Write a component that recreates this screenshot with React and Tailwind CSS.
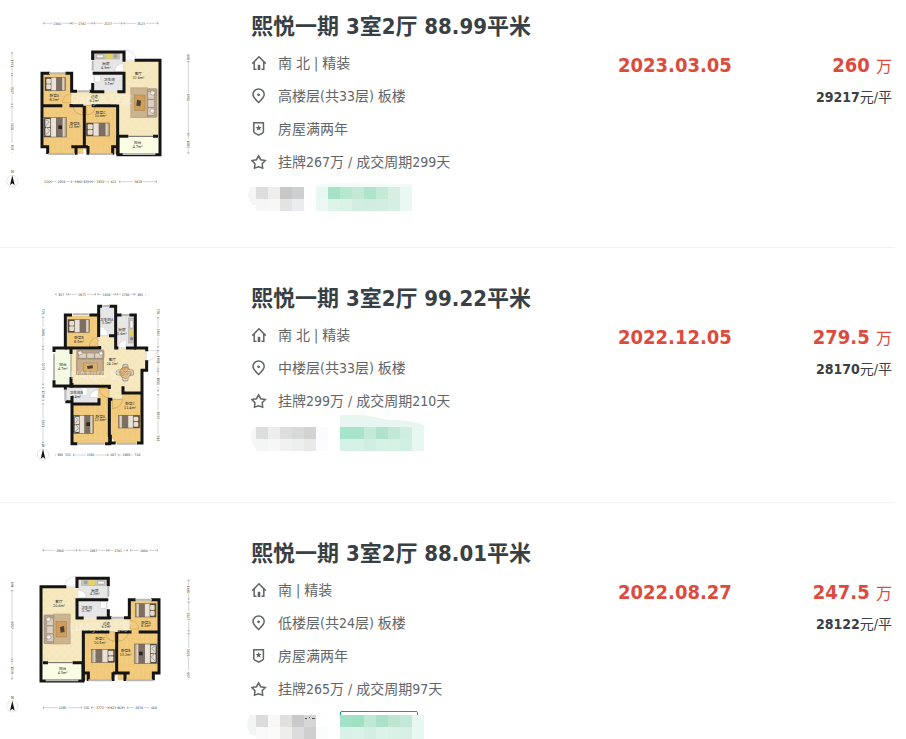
import React from 'react';

const HomeIcon = () => (
  <svg width="16" height="16" viewBox="0 0 16 16" fill="none" stroke="#5f6568" strokeWidth="1.5" aria-hidden="true">
    <path d="M1.3 8.6 8 1.8l6.7 6.8" />
    <path d="M3.2 7v7.2h2.3M12.8 7v7.2h-2.3" />
    <path d="M8 9.8V15" strokeWidth="2.6" />
  </svg>
);

const PinIcon = () => (
  <svg width="16" height="16" viewBox="0 0 16 16" fill="none" stroke="#5f6568" strokeWidth="1.5" aria-hidden="true">
    <path d="M7.6 14.4C5 12 2 9.6 2 6.6a5.6 5.6 0 0 1 11.2 0c0 3-3 5.4-5.6 7.8Z" />
    <circle cx="7.6" cy="6.8" r="1.4" fill="#5f6568" stroke="none" />
  </svg>
);

const BadgeIcon = () => (
  <svg width="16" height="16" viewBox="0 0 16 16" fill="none" stroke="#5f6568" strokeWidth="1.5" aria-hidden="true">
    <path d="M2.8 1.8h9.6v9.3c0 1-1.8 1.8-4.8 2.9-3-1.1-4.8-1.9-4.8-2.9Z" />
    <path d="m7.6 4 .9 2h2.1L9 7.4l.6 2.2-2-1.2-2 1.2.6-2.2L4.600 6h2.1Z" fill="#5f6568" stroke="none" />
  </svg>
);

const StarIcon = () => (
  <svg width="16" height="16" viewBox="0 0 16 16" fill="none" stroke="#5f6568" strokeWidth="1.5" aria-hidden="true">
    <path d="m7.600 1.800 2.100 3.900 4.600.8-3.100 3.300.5 4.300-4.100-1.200-4.100 1.200.5-4.300L.9 6.500l4.600-.8Z" />
  </svg>
);

const icons = { home: HomeIcon, pin: PinIcon, badge: BadgeIcon, star: StarIcon };

const Bed = ({ x, y, w, h, flip = false }) => (
  <g transform={flip ? `translate(${2 * x + w} 0) scale(-1 1)` : undefined}>
    <rect x={x} y={y} width={w} height={h} fill="#b5a68e" />
    <rect x={x} y={y} width={w * 0.3} height={h} fill="#5b4a3c" />
    <rect x={x + 4} y={y + 4} width={w * 0.22} height={h / 2 - 5} rx="3" fill="#e8ded0" />
    <rect x={x + 4} y={y + h / 2 + 1} width={w * 0.22} height={h / 2 - 5} rx="3" fill="#e8ded0" />
    <rect x={x + w * 0.32} y={y} width={w * 0.22} height={h} fill="#e9e2d6" />
    <rect x={x + w * 0.54} y={y} width={w * 0.3} height={h} fill="#7d6f64" />
    <rect x={x + w * 0.84} y={y} width={w * 0.08} height={h} fill="#e0d4c0" />
    <rect x={x} y={y} width={w} height={h} fill="none" stroke="#5c5042" strokeWidth="1.5" />
  </g>
);

const RoomLabel = ({ x, y, name, area }) => (
  <text x={x} y={y} textAnchor="middle" fontSize="11" fill="#222">
    <tspan>{name}</tspan>
    <tspan x={x} dy="11">{area}</tspan>
  </text>
);

// marks: [centre, length, text]; vertical rulers are the same thing turned by 90 degrees
const Ruler = ({ x = 0, y = 0, turn = 0, marks }) => (
  <g transform={`translate(${x} ${y}) rotate(${turn})`}>
    {marks.map(([at, length, text], i) => (
      <g key={i}>
        <path d={`M${at - length / 2} 0h${length}`} stroke="#aaa" strokeWidth="1.5" />
        <path d={`m${at - length / 2 + 4} -3 -4 3 4 3M${at + length / 2 - 4} -3l4 3-4 3`} fill="none" stroke="#777" strokeWidth="1.5" />
        <rect x={at - 14} y="-5" width="28" height="10" fill="#fff" />
        <text x={at} y="4" textAnchor="middle" fontSize="10" fill="#333">{text}</text>
      </g>
    ))}
  </g>
);

const Compass = ({ x, y }) => (
  <g>
    <circle cx={x} cy={y} r="17" fill="#fff" stroke="#ccc" strokeWidth="1.5" />
    <path d={`M${x} ${y - 17}l7 30-7-6-7 6Z`} fill="#111" />
    <text x={x} y={y - 23} textAnchor="middle" fontSize="12" fill="#333">N</text>
  </g>
);

const Defs = () => (
  <defs>
    <pattern id="wood" width="16" height="40" patternUnits="userSpaceOnUse">
      <rect width="16" height="40" fill="#f2cc80" />
      <path d="M0 0v40M8 0v40M0 8h8M8 28h8" stroke="#e9bf6e" strokeWidth="1.5" />
    </pattern>
    <pattern id="tile" width="14" height="14" patternUnits="userSpaceOnUse">
      <rect width="14" height="14" fill="#e7e7e8" />
      <path d="M0 0h14M0 0v14" stroke="#dcdcdd" />
    </pattern>
    <pattern id="stone" width="24" height="24" patternUnits="userSpaceOnUse">
      <rect width="24" height="24" fill="#f6e8bf" />
      <path d="M0 12 12 0l12 12-12 12Z" fill="none" stroke="#efdfb0" />
    </pattern>
  </defs>
);

const PlanFrame = ({ top, label, children }) => (
  <svg
    className="block w-full h-auto"
    viewBox={`0 ${top} 600 600`}
    role="img"
    aria-label={label}
    fontFamily="'DejaVu Sans Condensed', 'Noto Sans CJK SC', sans-serif"
  >
    <Defs />
    {children}
  </svg>
);

const CornerFlat = () => (
  <g>
    <path d="M130 192h83v98h37v142H143v-22h-13Z" fill="url(#wood)" />
    <path d="M250 288h102v144h-88l-14-22Z" fill="url(#wood)" />
    <path d="M213 246h159v-94h105v228H354v-92H213Z" fill="url(#stone)" />
    <path d="M280 130h90v60h-90Z M280 194h90v52h-90Z" fill="url(#tile)" />
    <path d="M356 382h119v48H356Z" fill="#fbfce4" />
    <g fill="#fff" stroke="#c4c4c4" strokeWidth="1.5">
      <path d="M376 150v-31q26 3 34 31Z" />
      <path d="M370 160q-24 2-26 24h26Z" />
      <path d="M213 252q-24 2-26 26h26Z" fill="none" stroke="#c69c55" />
      <path d="M248 286h-30q3 26 30 29ZM260 286h27q-3 26-27 29Z" fill="#f2cc80" stroke="#b98d45" />
      <rect x="284" y="196" width="18" height="20" rx="2" />
    </g>
    <rect x="284" y="130" width="74" height="17" fill="#c9c4b8" stroke="#888" />
    <rect x="319" y="131" width="18" height="15" fill="#e7d361" />
    <path d="M290 135h20v8h-20Z" fill="#f7f7f7" stroke="#777" />
    <circle cx="346" cy="138" r="5" fill="#aaa" stroke="#777" />
    <rect x="391" y="232" width="53" height="92" fill="#c6ac87" />
    <rect x="395" y="236" width="45" height="84" fill="#ccb491" />
    <g fill="#dfd1c0" stroke="#8b7867" strokeWidth="1.5">
      <rect x="442" y="236" width="29" height="86" rx="3" fill="#b7a594" />
      <rect x="443" y="245" width="20" height="23" rx="3" />
      <rect x="443" y="269" width="20" height="23" rx="3" />
      <rect x="443" y="293" width="20" height="23" rx="3" />
      <path d="m455 241 11 6-6 10-10-6ZM454 295l11 5-6 11-10-6Z" fill="#f2ede5" />
    </g>
    <rect x="403" y="255" width="32" height="47" fill="#cf9e5c" stroke="#8a6a3b" />
    <path d="m411 269 12 3-2 17-12-2Z" fill="#4a4238" />
    <Bed x={135} y={202} w={62} h={40} />
    <Bed x={132} y={323} w={67} h={58} />
    <path d="m133 326 15 10-12 12 13 14-14 15" fill="none" stroke="#83aec0" strokeWidth="3" />
    <rect x="175" y="346" width="11" height="11" fill="#26251f" />
    <Bed x={259} y={339} w={69} h={39} />
    <g fill="none" stroke="#141414" strokeWidth="9">
      <path d="M150 190h-24v220h17v22M196 190h19v54h16M268 244h10v-24M278 150v-24h94v29M278 190h94v55h-20M278 219v26h35M404 151h76v283H354v-55M474 379h-15M385 379H354" />
      <path d="M126 287h61M213 282v5h37M253 287v123M275 287h78v147M214 410h39M228 408v26M264 408v26M253 410h11M338 434v-24h15" />
    </g>
    <path d="M147 190h49M231 244h39M145 432h80M268 432h70M368 432h98M278 152v30" fill="none" stroke="#b8b8b8" strokeWidth="6" />
    <path d="M385 379h75" stroke="#666" strokeWidth="3" />
  </g>
);

const EastPlan = () => (
  <PlanFrame top={-18} label="户型图 88.99平米">
    <CornerFlat />
    <text x="304" y="283" textAnchor="middle" fontSize="34" fill="#fff" opacity="0.4">LIANJIA 链家</text>
    <RoomLabel x={318} y={166} name="厨房" area="4.9m²" />
    <RoomLabel x={328} y={214} name="卫生间" area="3.7m²" />
    <RoomLabel x={415} y={196} name="客厅" area="22.6m²" />
    <RoomLabel x={163} y={261} name="卧室A" area="8.2m²" />
    <RoomLabel x={283} y={265} name="过道" area="6.2m²" />
    <RoomLabel x={224} y={344} name="卧室B" area="12.9m²" />
    <RoomLabel x={302} y={311} name="卧室C" area="10.6m²" />
    <RoomLabel x={413} y={403} name="阳台" area="4.7m²" />
    <Ruler y={40} marks={[[172, 84, '2366'], [246, 64, '1741'], [324, 86, '2537'], [423, 104, '3523']]} />
    <Ruler y={515} marks={[[141, 22, '526'], [184, 66, '2054'], [249, 50, '842·835'], [301, 54, '1810'], [340, 24, '623'], [414, 114, '3419']]} />
    <Ruler x={36} turn={90} marks={[[160, 66, '1701'], [240, 90, '2537'], [350, 124, '3535'], [413, 28, '807']]} />
    <Ruler x={565} turn={90} marks={[[141, 26, '648'], [263, 220, '6452'], [402, 58, '1380']]} />
    <Compass x={37} y={513} />
  </PlanFrame>
);

const WestPlan = () => (
  <PlanFrame top={-27} label="户型图 88.01平米">
    <g transform="translate(603 -11) scale(-1 1)">
      <CornerFlat />
    </g>
    <text x="302" y="272" textAnchor="middle" fontSize="34" fill="#fff" opacity="0.4">LIANJIA 链家</text>
    <RoomLabel x={285} y={155} name="厨房" area="4.2m²" />
    <RoomLabel x={260} y={206} name="卫生间" area="3.7m²" />
    <RoomLabel x={177} y={189} name="客厅" area="20.6m²" />
    <RoomLabel x={438} y={251} name="卧室A" area="8.1m²" />
    <RoomLabel x={319} y={254} name="过道" area="6.2m²" />
    <RoomLabel x={377} y={336} name="卧室B" area="13.2m²" />
    <RoomLabel x={300} y={300} name="卧室C" area="10.5m²" />
    <RoomLabel x={188} y={391} name="阳台" area="4.5m²" />
    <Ruler y={31} marks={[[180, 104, '2960'], [280, 86, '2497'], [354, 60, '1741'], [432, 84, '2406']]} />
    <Ruler y={503} marks={[[188, 118, '3395'], [260, 28, '505'], [300, 54, '1772'], [350, 50, '623·863'], [417, 72, '2074'], [462, 24, '660']]} />
    <Ruler x={36} turn={90} marks={[[134, 26, '648'], [255, 210, '6457'], [390, 56, '1328']]} />
    <Ruler x={566} turn={90} marks={[[149, 60, '1680'], [229, 90, '2527'], [338, 118, '3425'], [405, 26, '647']]} />
    <Compass x={37} y={499} />
  </PlanFrame>
);

const CrossPlan = () => (
  <PlanFrame top={-27} label="户型图 99.22平米">
    <path d="M200 92h95v97h-95ZM218 332l80-28h29v170H218ZM330 326h96v148h-78l-18-20Z" fill="url(#wood)" />
    <path d="M215 190h82v-38h49v37h92v66h-14v70h-58v17h-38v-39H215Z" fill="url(#stone)" />
    <path d="M297 66h50v86h-50ZM349 92h56v98h-56ZM197 308h98v48h-78v-5h-20Z" fill="url(#tile)" />
    <path d="M164 192h49v108h-49Z" fill="#f4fbe2" />
    <g fill="#fff" stroke="#c4c4c4" strokeWidth="1.5">
      <path d="M439 197h34q-3 26-34 31Z" />
      <path d="M297 124q25 2 27 27h-27ZM355 188q2-22 24-22v22Z" />
      <path d="M294 157q-24 2-26 27h26ZM298 311q4 25 29 28v-28ZM337 343h30q-2 24-30 28Z" fill="#f2cc80" stroke="#b98d45" />
      <path d="M294 314q-23 3-25 23l25 1Z" />
    </g>
    <rect x="386" y="99" width="17" height="75" fill="#c9c4b8" stroke="#888" />
    <path d="M390 107h9v22h-9Z" fill="#fafafa" stroke="#777" />
    <path d="M388 136h13v15h-13Z" fill="#e7d361" />
    <circle cx="395" cy="161" r="5" fill="#888" />
    <rect x="228" y="220" width="84" height="50" fill="#b89c79" />
    <rect x="233" y="224" width="74" height="42" fill="#c7ae8d" />
    <g fill="#dfd1c0" stroke="#8b7867" strokeWidth="1.5">
      <rect x="230" y="195" width="82" height="26" rx="3" fill="#b7a594" />
      <rect x="236" y="204" width="23" height="16" rx="3" />
      <rect x="260" y="204" width="23" height="16" rx="3" />
      <rect x="284" y="204" width="23" height="16" rx="3" />
      <path d="m233 202 9-5 6 9-10 5ZM296 203l9-5 5 10-10 4Z" fill="#f2ede5" />
    </g>
    <rect x="250" y="234" width="42" height="25" fill="#dcb06c" stroke="#8a6a3b" />
    <path d="m261 243 17-2 1 9-16 2Z" fill="#4a4238" />
    <g fill="#d8cbb7" stroke="#77644d" strokeWidth="1.5">
      <rect x="368" y="238" width="16" height="15" rx="4" />
      <rect x="368" y="273" width="16" height="15" rx="4" />
      <rect x="349" y="255" width="15" height="16" rx="4" />
      <rect x="386" y="255" width="15" height="16" rx="4" />
      <circle cx="376" cy="263" r="17" fill="#d8a35f" />
      <path d="m368 255 16 16M384 255l-16 16" />
    </g>
    <Bed x={204} y={104} w={65} h={38} />
    <Bed x={220} y={391} w={61} h={54} />
    <path d="m222 394 13 10-11 12 12 13-12 14" fill="none" stroke="#83aec0" strokeWidth="3" />
    <rect x="259" y="412" width="11" height="11" fill="#26251f" />
    <Bed x={355} y={391} w={64} h={38} flip />
    <rect x="249" y="304" width="10" height="25" rx="2" fill="#fff" />
    <g fill="none" stroke="#141414" strokeWidth="9">
      <path d="M216 90h-20v99h-34v12M162 286v17h54v-9M268 90h28V64h10M328 64h19v88M347 90h18M388 90h18v99h34v10M440 226v30h-14v218h-15M347 474h-16v-20h-2v22h-14M232 476h-16V333" />
      <path d="M196 189h103v-6M296 90v66M327 152h20v37h8M378 189h30M213 189v18M213 276v28h115v8M196 304v10M196 350h20M213 357h84v-17M328 338v118M328 343h9M369 304v20h57" />
    </g>
    <path d="M218 88h48M307 63h22M365 90h22M162 206v78M196 314v34M232 476h82M350 476h60" fill="none" stroke="#b8b8b8" strokeWidth="6" />
    <path d="M213 207v70" stroke="#888" strokeWidth="3" />
    <text x="304" y="281" textAnchor="middle" fontSize="34" fill="#fff" opacity="0.4">LIANJIA 链家</text>
    <RoomLabel x={237} y={163} name="卧室B" area="8.5m²" />
    <RoomLabel x={320} y={107} name="卫生间A" area="3.5m²" />
    <RoomLabel x={366} y={139} name="厨房" area="5.6m²" />
    <RoomLabel x={189} y={244} name="阳台" area="4.7m²" />
    <RoomLabel x={337} y={229} name="客厅" area="24.1m²" />
    <RoomLabel x={229} y={328} name="卫生间B" area="4.4m²" />
    <RoomLabel x={301} y={398} name="卧室A" area="12.6m²" />
    <RoomLabel x={390} y={360} name="卧室C" area="11.4m²" />
    <Ruler y={28} marks={[[184, 36, '917'], [246, 84, '2871'], [320, 56, '1454'], [377, 54, '1700'], [421, 30, '885']]} />
    <Ruler y={510} marks={[[181, 30, '980'], [204, 24, '515'], [272, 106, '3382'], [340, 28, '607'], [379, 50, '1808'], [413, 24, '514']]} />
    <Ruler x={129} turn={90} marks={[[80, 26, '725'], [141, 92, '2685'], [245, 110, '3273'], [327, 42, '1296'], [415, 120, '3601']]} />
    <Ruler x={474} turn={90} marks={[[80, 26, '735'], [142, 92, '2802'], [224, 60, '1838'], [288, 62, '1851'], [390, 126, '3800'], [460, 24, '514']]} />
    <Compass x={129} y={509} />
  </PlanFrame>
);

const Pixels = ({ x, y, rows }) =>
  rows.map((row, r) =>
    row.map((color, c) => <rect key={`${r}-${c}`} x={x + c * 12} y={y + r * 12} width="12" height="12" fill={color} />)
  );

const Mosaic = ({ y, smudge, outline, grayX, gray, greenX, green }) => (
  <svg className="block overflow-visible" width="180" height="34" viewBox="0 0 180 34" shapeRendering="crispEdges" aria-hidden="true">
    {smudge.map(([d, fill]) => (
      <path key={d} d={d} fill={fill} shapeRendering="auto" />
    ))}
    <Pixels x={grayX} y={y} rows={gray} />
    {outline && (
      <>
        <path d="M58 13h2M62 12h1M65 13h3" stroke="#4c5356" />
        <rect x={greenX + 0.5} y="6.5" width="77" height="22" rx="2" fill="#fff" stroke="#12a96a" />
      </>
    )}
    <Pixels x={greenX} y={y} rows={green} />
  </svg>
);

const listings = [
  {
    id: 1,
    Plan: EastPlan,
    title: '熙悦一期 3室2厅 88.99平米',
    details: [
      ['home', '南 北 | 精装'],
      ['pin', '高楼层(共33层) 板楼'],
      ['badge', '房屋满两年'],
      ['star', '挂牌267万 / 成交周期299天'],
    ],
    date: '2023.03.05',
    price: '260',
    unitPrice: '29217',
    spacing: 'pt-1 pb-[35px]',
    mosaic: {
      y: 9,
      smudge: [
        ['M9 9H4Q-3 18 6 27q12 0 21 4l12 2V9Z', '#f5f6f5'],
        ['M69 9V7q10-2 24-2l72 1v3Z', '#f3fbf7'],
      ],
      grayX: 9,
      gray: [['#dddedd', '#f0eeed', '#c9c7c8', '#ccd0d1'], ['#f5f6f5', '#f7f7f6', '#e4e3e4', '#ebecef']],
      greenX: 69,
      green: [
        ['#e8f7f1', '#a5e2c8', '#b6e8d0', '#c3e9d6', '#b0e3cb', '#c5e9d7', '#d7efe1', '#e9f8f2'],
        ['#ebf8f3', '#def4e9', '#dbf3e7', '#d2eee0', '#d0ede0', '#d2eee1', '#d5efe2', '#e9f8f2'],
      ],
    },
  },
  {
    id: 2,
    Plan: CrossPlan,
    title: '熙悦一期 3室2厅 99.22平米',
    details: [
      ['home', '南 北 | 精装'],
      ['pin', '中楼层(共33层) 板楼'],
      ['star', '挂牌299万 / 成交周期210天'],
    ],
    date: '2022.12.05',
    price: '279.5',
    unitPrice: '28170',
    spacing: 'pt-7 pb-[26px]',
    mosaic: {
      y: 10,
      smudge: [
        ['M9 10q-6 4-5 12 1 8 9 12h8V10Z', '#f5f6f6'],
        ['M93 10V-2h24q12 2 24 5 24 0 36 5v2Z', '#e7f6f0'],
      ],
      grayX: 9,
      gray: [['#dcdedd', '#ededee', '#dededf', '#d8dada', '#d5d3d1', '#fafbfd'], ['#f5f5f5', '#f7f7f7', '#f1f1f1', '#eeeeee', '#e9e9e9', '#fcfcfe']],
      greenX: 93,
      green: [
        ['#a8e4ca', '#a8e4ca', '#c4e9d9', '#b0e3cc', '#c1e8d6', '#d0eee0', '#e8f7f1'],
        ['#d6f1e5', '#d6f1e5', '#d0eee1', '#d6f1e5', '#d5f1e4', '#d1efe2', '#e8f7f1'],
      ],
    },
  },
  {
    id: 3,
    Plan: WestPlan,
    title: '熙悦一期 3室2厅 88.01平米',
    details: [
      ['home', '南 | 精装'],
      ['pin', '低楼层(共24层) 板楼'],
      ['badge', '房屋满两年'],
      ['star', '挂牌265万 / 成交周期97天'],
    ],
    date: '2022.08.27',
    price: '247.5',
    unitPrice: '28122',
    spacing: 'pt-7',
    mosaic: {
      y: 10,
      smudge: [['M9 10H3q-7 12 2 20l16 4V10Z', '#f3f5f4']],
      outline: true,
      grayX: 9,
      gray: [['#dadcdb', '#faf8f7', '#e1e0df', '#c9c9cc', '#d6d6d7', '#fdfefe'], ['#f8f9f8', '#fbfbfa', '#eeeeed', '#dcdcdd', '#cfcfd0', '#fbfcfc']],
      greenX: 93,
      green: [
        ['#a3e2c6', '#a0e1c3', '#bfe8d6', '#abe1c8', '#bee5d2', '#c5e9d8', '#e8f7f1'],
        ['#d8f2e7', '#dbf3e8', '#d3efe3', '#dcf3e9', '#d9f2e6', '#d6f0e4', '#e9f7f2'],
      ],
    },
  },
];

const DetailRow = ({ icon, children }) => {
  const Icon = icons[icon];
  return (
    <li className="flex items-center h-[33px] gap-[11px] text-sm text-[#616669]">
      <Icon />
      <span>{children}</span>
    </li>
  );
};

const ListingItem = ({ listing }) => {
  const { Plan, title, details, date, price, unitPrice, spacing, mosaic } = listing;
  return (
    <li className={`flex items-start border-b border-[#f0f1f1] ${spacing}`}>
      <div className="w-[200px] shrink-0">
        <Plan />
      </div>
      <div className="flex-1 min-w-0 pt-[7px] pl-[51px]">
        <h2 className="text-[22px] leading-8 font-bold text-[#394043] whitespace-nowrap">{title}</h2>
        <ul className="mt-[3px]">
          {details.map(([icon, text]) => (
            <DetailRow key={icon} icon={icon}>{text}</DetailRow>
          ))}
        </ul>
        <div className="-ml-1">
          <Mosaic {...mosaic} />
        </div>
      </div>
      <div className="flex justify-between w-[277px] shrink-0 pt-[47px] pr-[3px] whitespace-nowrap">
        <div className="text-xl leading-7 font-bold text-[#db4c3f]">{date}</div>
        <div className="text-right">
          <div className="text-xl leading-7 font-bold text-[#db4c3f]">
            {price} <span className="text-base font-normal">万</span>
          </div>
          <div className="mt-2 text-sm leading-5 text-[#394043]">
            <span className="font-bold">{unitPrice}</span>元/平
          </div>
        </div>
      </div>
    </li>
  );
};

export default function App() {
  return (
    <main className="h-screen overflow-hidden bg-white pr-[11px] font-['DejaVu_Sans_Condensed','Noto_Sans_CJK_SC',sans-serif]">
      <ul>
        {listings.map((listing) => (
          <ListingItem key={listing.id} listing={listing} />
        ))}
      </ul>
    </main>
  );
}
